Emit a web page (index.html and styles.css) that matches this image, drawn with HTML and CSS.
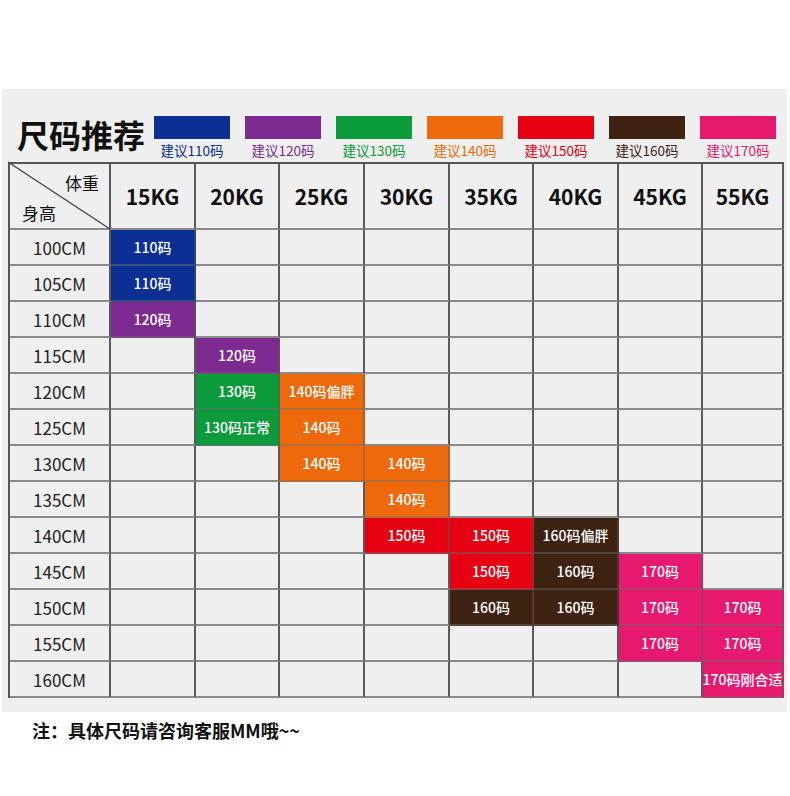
FILE: index.html
```html
<!DOCTYPE html>
<html lang="zh-CN">
<head>
<meta charset="utf-8">
<title>尺码推荐</title>
<link rel="stylesheet" href="styles.css">
</head>
<body>
<div class="panel">
  <div class="head">
    <div class="title">尺码推荐</div>
    <div class="legend">
      <div class="item c-blue-t"><span class="sw blue"></span><span class="lab">建议110码</span></div>
      <div class="item c-purple-t"><span class="sw purple"></span><span class="lab">建议120码</span></div>
      <div class="item c-green-t"><span class="sw green"></span><span class="lab">建议130码</span></div>
      <div class="item c-orange-t"><span class="sw orange"></span><span class="lab">建议140码</span></div>
      <div class="item c-red-t"><span class="sw red"></span><span class="lab">建议150码</span></div>
      <div class="item c-brown-t"><span class="sw brown"></span><span class="lab">建议160码</span></div>
      <div class="item c-pink-t"><span class="sw pink"></span><span class="lab">建议170码</span></div>
    </div>
  </div>
  <div class="grid">
    <div class="cell corner">
      <svg class="diag" viewBox="0 0 100 100" preserveAspectRatio="none"><line x1="0" y1="0" x2="100" y2="100" vector-effect="non-scaling-stroke"/></svg>
      <span class="wt">体重</span>
      <span class="ht">身高</span>
    </div>
    <div class="cell kg">15KG</div>
    <div class="cell kg">20KG</div>
    <div class="cell kg">25KG</div>
    <div class="cell kg">30KG</div>
    <div class="cell kg">35KG</div>
    <div class="cell kg">40KG</div>
    <div class="cell kg">45KG</div>
    <div class="cell kg">55KG</div>

    <div class="cell rh">100CM</div>
    <div class="cell f blue">110码</div><div class="cell"></div><div class="cell"></div><div class="cell"></div><div class="cell"></div><div class="cell"></div><div class="cell"></div><div class="cell"></div>

    <div class="cell rh">105CM</div>
    <div class="cell f blue">110码</div><div class="cell"></div><div class="cell"></div><div class="cell"></div><div class="cell"></div><div class="cell"></div><div class="cell"></div><div class="cell"></div>

    <div class="cell rh">110CM</div>
    <div class="cell f purple">120码</div><div class="cell"></div><div class="cell"></div><div class="cell"></div><div class="cell"></div><div class="cell"></div><div class="cell"></div><div class="cell"></div>

    <div class="cell rh">115CM</div>
    <div class="cell"></div><div class="cell f purple">120码</div><div class="cell"></div><div class="cell"></div><div class="cell"></div><div class="cell"></div><div class="cell"></div><div class="cell"></div>

    <div class="cell rh">120CM</div>
    <div class="cell"></div><div class="cell f green">130码</div><div class="cell f orange">140码偏胖</div><div class="cell"></div><div class="cell"></div><div class="cell"></div><div class="cell"></div><div class="cell"></div>

    <div class="cell rh">125CM</div>
    <div class="cell"></div><div class="cell f green">130码正常</div><div class="cell f orange">140码</div><div class="cell"></div><div class="cell"></div><div class="cell"></div><div class="cell"></div><div class="cell"></div>

    <div class="cell rh">130CM</div>
    <div class="cell"></div><div class="cell"></div><div class="cell f orange">140码</div><div class="cell f orange">140码</div><div class="cell"></div><div class="cell"></div><div class="cell"></div><div class="cell"></div>

    <div class="cell rh">135CM</div>
    <div class="cell"></div><div class="cell"></div><div class="cell"></div><div class="cell f orange">140码</div><div class="cell"></div><div class="cell"></div><div class="cell"></div><div class="cell"></div>

    <div class="cell rh">140CM</div>
    <div class="cell"></div><div class="cell"></div><div class="cell"></div><div class="cell f red">150码</div><div class="cell f red">150码</div><div class="cell f brown">160码偏胖</div><div class="cell"></div><div class="cell"></div>

    <div class="cell rh">145CM</div>
    <div class="cell"></div><div class="cell"></div><div class="cell"></div><div class="cell"></div><div class="cell f red">150码</div><div class="cell f brown">160码</div><div class="cell f pink">170码</div><div class="cell"></div>

    <div class="cell rh">150CM</div>
    <div class="cell"></div><div class="cell"></div><div class="cell"></div><div class="cell"></div><div class="cell f brown">160码</div><div class="cell f brown">160码</div><div class="cell f pink">170码</div><div class="cell f pink">170码</div>

    <div class="cell rh">155CM</div>
    <div class="cell"></div><div class="cell"></div><div class="cell"></div><div class="cell"></div><div class="cell"></div><div class="cell"></div><div class="cell f pink">170码</div><div class="cell f pink">170码</div>

    <div class="cell rh">160CM</div>
    <div class="cell"></div><div class="cell"></div><div class="cell"></div><div class="cell"></div><div class="cell"></div><div class="cell"></div><div class="cell"></div><div class="cell f pink">170码刚合适</div>
  </div>
</div>
<p class="note">注：具体尺码请咨询客服MM哦~~</p>
</body>
</html>
```

FILE: styles.css
```css
html, body {
  margin: 0;
  padding: 0;
  background: #ffffff;
}
body {
  font-family: "Noto Sans CJK SC", "Noto Sans", sans-serif;
  color: #111;
}
.panel {
  margin: 89px 0 0 2px;
  width: 785px;
  height: 623px;
  box-sizing: border-box;
  padding: 27px 0 0 6px;
  background: #efefef;
}
.head {
  display: flex;
  height: 46px;
}
.title {
  margin: 2px 0 0 9px;
  font-size: 32px;
  line-height: 32px;
  font-weight: 700;
  color: #111;
  white-space: nowrap;
}
.legend {
  display: flex;
  gap: 15px;
  margin-left: 9px;
}
.item {
  width: 76px;
  display: flex;
  flex-direction: column;
  align-items: center;
}
.sw {
  display: block;
  width: 76px;
  height: 23px;
}
.lab {
  margin-top: 2px;
  font-size: 13.5px;
  line-height: 18px;
  white-space: nowrap;
}
.blue { background: #0b2f92; }
.purple { background: #7d2b91; }
.green { background: #0b9a3c; }
.orange { background: #ee690b; }
.red { background: #e50012; }
.brown { background: #3e2212; }
.pink { background: #e6196f; }
.c-blue-t { color: #0b2f92; }
.c-purple-t { color: #7d2b91; }
.c-green-t { color: #0b9a3c; }
.c-orange-t { color: #ee690b; }
.c-red-t { color: #e50012; }
.c-brown-t { color: #3e2212; }
.c-pink-t { color: #e6196f; }

.grid {
  display: grid;
  grid-template-columns: 101px 85px 84px 85px 85px 84px 85px 84px 81px;
  grid-template-rows: 66px repeat(13, 36px);
  width: max-content;
  border-left: 2px solid #555;
  border-top: 2px solid #555;
}
.cell {
  box-sizing: border-box;
  border-right: 2px solid #5a5a5a;
  border-bottom: 2px solid #8a8a8a;
  display: flex;
  align-items: center;
  justify-content: center;
  white-space: nowrap;
}
.corner {
  position: relative;
  flex-direction: column;
  align-items: stretch;
  justify-content: space-between;
  padding: 7px 10px 3px 12px;
  font-size: 17px;
  line-height: 24px;
  color: #111;
}
.diag {
  position: absolute;
  top: -2px;
  left: -2px;
  width: calc(100% + 3px);
  height: calc(100% + 3px);
  overflow: visible;
}
.diag line {
  stroke: #444;
  stroke-width: 1.4;
}
.wt { text-align: right; position: relative; }
.ht { text-align: left; position: relative; }
.kg {
  font-size: 21px;
  font-weight: 700;
  color: #111;
}
.rh {
  font-size: 17px;
  color: #222;
}
.f {
  color: #ffffff;
  font-size: 14px;
  font-weight: 500;
  border-right-color: rgba(90, 90, 90, 0.45);
  border-bottom-color: rgba(110, 110, 110, 0.45);
}
.note {
  margin: 6px 0 0 32px;
  font-size: 18px;
  line-height: 24px;
  font-weight: 700;
  color: #111;
}
```
